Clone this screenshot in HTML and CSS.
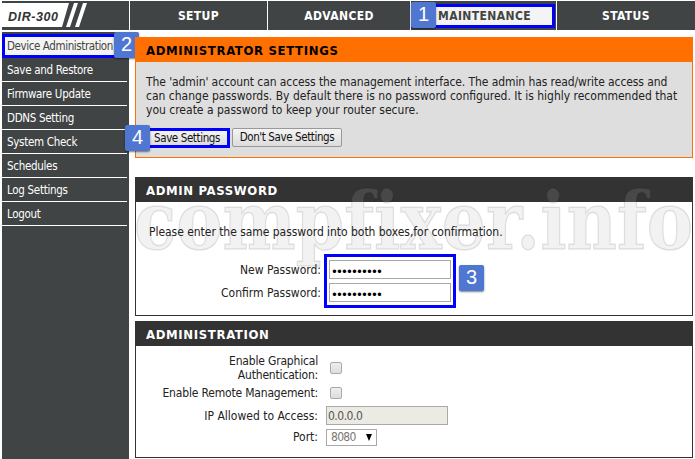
FILE: index.html
```
<!DOCTYPE html>
<html lang="en">
<head>
    <meta charset="UTF-8">
    <title>DIR-300 Administrator Settings</title>
    <link rel="stylesheet" href="styles.css">
</head>
<body>
    <div class="topnav">
        <div class="logo">
            <svg width="127" height="29" viewBox="0 0 127 29">
                <path d="M0 2H67L60 26H0Z M72 2H76L68 26H64Z M81 2H85L77 26H73Z" fill="#fff"/>
                <text x="6" y="20" textLength="50" class="logo-text">DIR-300</text>
            </svg>
        </div>
        <div class="tab">SETUP</div>
        <div class="tab">ADVANCED</div>
        <div class="tab"><div class="active-tab">MAINTENANCE</div><span class="badge badge-1">1</span></div>
        <div class="tab">STATUS</div>
    </div>

    <div class="page">
        <div class="sidebar">
            <div class="active-item">Device Administration<span class="badge badge-2">2</span></div>
            <div class="item">Save and Restore</div>
            <div class="item">Firmware Update</div>
            <div class="item">DDNS Setting</div>
            <div class="item">System Check</div>
            <div class="item">Schedules</div>
            <div class="item">Log Settings</div>
            <div class="item">Logout</div>
        </div>

        <div class="content">
            <div class="box orange">
                <h2>ADMINISTRATOR SETTINGS</h2>
                <p class="intro"><span class="first-line">The 'admin' account can access the management interface. The admin has read/write access and</span><br>
                can change passwords. By default there is no password configured. It is highly recommended that<br>
                you create a password to keep your router secure.</p>
                <div class="buttons">
                    <button class="save">Save Settings</button>
                    <button class="dont">Don't Save Settings</button>
                    <span class="badge badge-4">4</span>
                </div>
            </div>

            <div class="box password">
                <h2>ADMIN PASSWORD</h2>
                <svg class="watermark" width="562" height="92" viewBox="0 0 562 92">
                    <text x="0" y="68" textLength="559" lengthAdjust="spacingAndGlyphs">compfixer.info</text>
                </svg>
                <p class="hint">Please enter the same password into both boxes,for confirmation.</p>
                <div class="pass-row">
                    <div class="pass-labels">
                        <label for="pass1">New Password:</label>
                        <label for="pass2">Confirm Password:</label>
                    </div>
                    <div class="pass-fields">
                        <input type="password" id="pass1" value="0123456789">
                        <input type="password" id="pass2" value="0123456789">
                        <span class="badge badge-3">3</span>
                    </div>
                </div>
            </div>

            <div class="box admin">
                <h2>ADMINISTRATION</h2>
                <div class="form">
                    <label for="graph">Enable Graphical<br>Authentication:</label>
                    <input type="checkbox" id="graph">
                    <label for="remote">Enable Remote Management:</label>
                    <input type="checkbox" id="remote">
                    <label for="ip">IP Allowed to Access:</label>
                    <input type="text" id="ip" value="0.0.0.0" disabled>
                    <label for="port">Port:</label>
                    <div class="select" id="port">8080<span class="arrow"></span></div>
                </div>
            </div>
        </div>
    </div>
</body>
</html>
```

FILE: styles.css
```
* {
    box-sizing: border-box;
}

body {
    margin: 0;
    padding: 1px 0 0 2px;
    width: 695px;
    height: 459px;
    overflow: hidden;
    background: #fff;
    color: #222;
    font-family: "DejaVu Sans Condensed", "DejaVu Sans", sans-serif;
    font-stretch: condensed;
    font-size: 12px;
    line-height: 14px;
}

.topnav {
    display: grid;
    grid-template-columns: 127px 137px 142px 145px 138px;
    gap: 1px;
    height: 29px;
}

.logo, .tab {
    background: #404444;
    height: 29px;
}

.logo svg {
    display: block;
}

.logo-text {
    font: italic bold 12.5px "Liberation Sans", sans-serif;
    fill: #333;
}

.tab {
    position: relative;
    display: flex;
    align-items: center;
    justify-content: center;
    color: #fff;
    font-weight: bold;
    letter-spacing: 0.4px;
}

.active-tab {
    width: 100%;
    height: 24px;
    margin-right: 1px;
    padding-left: 24px;
    border: 3px solid #0000ff;
    background: #f4f4f4;
    color: #444;
    line-height: 19px;
}

.badge {
    position: absolute;
    width: 25px;
    height: 26px;
    border-radius: 2px;
    background: #4f77d1;
    box-shadow: 0 1px 2px rgba(0, 0, 0, 0.5);
    color: #fff;
    font: 20px/25px "Liberation Sans", sans-serif;
    letter-spacing: 0;
    text-align: center;
}

.badge-1 {
    left: 0;
    top: 1px;
}

.badge-2 {
    left: 109px;
    top: -5px;
}

.badge-3 {
    left: 132px;
    top: 8px;
}

.badge-4 {
    left: -12px;
    top: -3px;
}

.page {
    display: flex;
    padding-top: 2px;
}

.sidebar {
    width: 127px;
    height: 427px;
    padding-top: 2px;
    background: #404444;
    flex: none;
    font-size: 11.5px;
    letter-spacing: -0.3px;
}

.active-item {
    position: relative;
    width: 127px;
    height: 24px;
    padding-left: 2px;
    border: 3px solid #0000ff;
    background: #f4f4f4;
    color: #444;
    line-height: 18px;
    letter-spacing: -0.4px;
    white-space: nowrap;
}

.item {
    width: 125px;
    height: 24px;
    padding-left: 5px;
    border-bottom: 1px solid #fff;
    color: #fff;
    line-height: 24px;
}

.content {
    width: 558px;
    margin: 5px 0 0 6px;
}

.box {
    position: relative;
    border: 1px solid #333;
}

h2 {
    margin: -1px -1px 0;
    height: 25px;
    padding-left: 11px;
    background: #333;
    color: #fff;
    font-size: 13px;
    line-height: 27px;
    letter-spacing: 0.65px;
}

.orange {
    height: 121px;
    border-color: #ff7000;
    background: #dedede;
}

.orange h2 {
    background: #ff7000;
    color: #000;
}

.intro {
    margin: 13px 0 0 10px;
    white-space: nowrap;
}

.first-line {
    letter-spacing: -0.09px;
}

.buttons {
    position: relative;
    display: flex;
    gap: 2px;
    margin: 11px 0 0 1px;
}

button {
    height: 19px;
    padding: 0;
    border: 1px solid #999;
    border-radius: 2px;
    background: linear-gradient(#f4f4f4, #dcdcdc);
    color: #111;
    font: inherit;
    font-size: 11.5px;
    letter-spacing: -0.4px;
    line-height: 17px;
}

.save {
    width: 93px;
    height: 20px;
    padding-left: 7px;
    border: 3px solid #0000ff;
    border-radius: 0;
    line-height: 14px;
}

.dont {
    width: 110px;
}

.password {
    height: 139px;
    margin-top: 19px;
}

.watermark {
    position: absolute;
    left: -2px;
    top: 3px;
    overflow: visible;
}

.watermark text {
    font: bold 81px "DejaVu Serif", serif;
    font-variant-ligatures: none;
    fill: rgba(180, 180, 180, 0.17);
    stroke: rgba(0, 0, 0, 0.1);
    stroke-width: 1.5px;
}

.hint {
    position: relative;
    margin: 23px 0 0 13px;
    letter-spacing: -0.04px;
}

.pass-row {
    position: relative;
    display: flex;
    margin-top: 15px;
}

.pass-labels {
    width: 185px;
    padding: 6px 0 0;
    text-align: right;
}

.pass-labels label {
    display: block;
    height: 23px;
    line-height: 21px;
}

.pass-fields {
    position: relative;
    display: flex;
    flex-direction: column;
    gap: 4px;
    width: 132px;
    height: 54px;
    margin-left: 3px;
    padding: 3px 2px;
    border: 3px solid #0000ff;
}

input {
    margin: 0;
    border: 1px solid #a9a9a9;
    font: inherit;
}

.pass-fields input {
    width: 122px;
    height: 19px;
    padding: 3px 1px 0;
    color: #000;
    background: #fff;
    font-size: 13px;
    letter-spacing: -1.9px;
}

.admin {
    height: 137px;
    margin-top: 5px;
}

.form {
    display: grid;
    grid-template-columns: 182px 122px;
    grid-template-rows: 24px 20px 19px 18px;
    column-gap: 8px;
    row-gap: 3px;
    align-items: center;
    padding-top: 10px;
    text-align: right;
}

.form input[type="checkbox"] {
    appearance: none;
    width: 12px;
    height: 12px;
    margin: 0 0 1px 4px;
    border: 1px solid #aaa;
    border-radius: 2px;
    background: linear-gradient(#eee, #ddd);
}

label[for="graph"],
label[for="remote"] {
    letter-spacing: -0.18px;
}

#ip {
    width: 122px;
    height: 19px;
    padding: 0 1px;
    background: #ebebe4;
    color: #555;
    letter-spacing: -0.5px;
}

.select {
    display: flex;
    align-items: center;
    justify-content: space-between;
    width: 51px;
    height: 17px;
    padding: 0 4px;
    border: 1px solid #a9a9a9;
    color: #777;
    letter-spacing: -0.7px;
}

.arrow {
    border: 3.5px solid transparent;
    border-top: 7px solid #000;
    border-bottom: 0;
}
```
